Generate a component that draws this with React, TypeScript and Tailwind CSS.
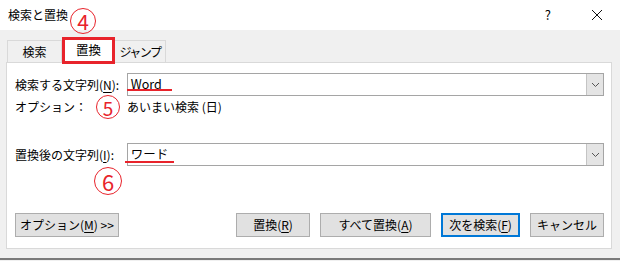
import type { ReactNode } from "react";

const FONT = "font-['Noto_Sans_CJK_JP','Noto_Sans',sans-serif]";

function Mn({ children }: { children: ReactNode }) {
  return <span className="underline underline-offset-2">{children}</span>;
}

function Circled({ n, className }: { n: string; className: string }) {
  return (
    <div
      className={`absolute flex items-center justify-center rounded-full border-[1.5px] border-[#e8232b] text-[#e8232b] leading-none ${className}`}
    >
      {n}
    </div>
  );
}

function Combo({ value }: { value: string }) {
  return (
    <div className="flex h-[23px] w-[478px] items-stretch border border-[#a5a5a5] bg-white">
      <div className="flex flex-1 items-center pl-[3px] text-[12.5px] text-black">{value}</div>
      <div className="flex w-[17px] items-center justify-center border-l border-[#c4c4c4] bg-[#e4e4e4]">
        <svg width="9" height="6" viewBox="0 0 9 6">
          <polyline points="1,1 4.5,4.5 8,1" fill="none" stroke="#555" strokeWidth="1" />
        </svg>
      </div>
    </div>
  );
}

function Btn({ children, w, primary }: { children: ReactNode; w: string; primary?: boolean }) {
  return (
    <div
      className={`flex h-[24px] items-center justify-center bg-[#e1e1e1] text-[12px] text-black ${w} ${
        primary ? "border-2 border-[#0078d7]" : "border border-[#adadad]"
      }`}
    >
      {children}
    </div>
  );
}

export default function App() {
  return (
    <div className={`relative h-[261px] w-[620px] overflow-hidden bg-[#f0f0f0] ${FONT}`}>
      {/* title bar */}
      <div className="flex h-[30px] items-center bg-white pl-[8px] text-[12px] text-black">
        <span>検索と置換</span>
        <span className="ml-auto mr-[40px] text-[13px]">?</span>
        <svg className="mr-[17px]" width="12" height="12" viewBox="0 0 12 12">
          <path d="M1 1L11 11M11 1L1 11" stroke="#111" strokeWidth="1" />
        </svg>
      </div>

      {/* tabs */}
      <div className="flex h-[32px] items-end pl-[7px] text-[12px] text-black">
        <div className="flex h-[22px] w-[55px] items-center justify-center border border-b-0 border-[#d9d9d9] bg-[#f0f0f0]">
          検索
        </div>
        <div className="relative z-10 -mb-[2px] flex h-[27px] w-[53px] items-center justify-center border-[3px] border-[#e8232b] bg-white pb-[1px] text-[12.5px]">
          置換
        </div>
        <div className="flex h-[22px] w-[51px] items-center justify-center border border-b-0 border-l-0 border-[#d9d9d9] bg-[#f0f0f0] tracking-[-1.5px]">
          ジャンプ
        </div>
      </div>

      {/* panel */}
      <div className="ml-[6px] flex h-[187px] w-[606px] flex-col border border-[#d9d9d9] bg-white pl-[8px] pr-[7px] pt-[10px] text-[12px] text-black">
        <div className="flex h-[23px] items-center">
          <div className="w-[112px]">
            検索する文字列(<Mn>N</Mn>):
          </div>
          <Combo value="Word" />
        </div>
        <div className="mt-[2px] flex h-[18px] items-center">
          <div className="w-[112px]">オプション：</div>
          <div>あいまい検索 (日)</div>
        </div>
        <div className="mt-[27px] flex h-[23px] items-center">
          <div className="w-[112px]">
            置換後の文字列(<Mn>I</Mn>):
          </div>
          <Combo value="ワード" />
        </div>
        <div className="mt-[47px] flex items-center">
          <Btn w="w-[104px]">
            オプション(<Mn>M</Mn>) &gt;&gt;
          </Btn>
          <div className="ml-auto flex gap-[10px]">
            <Btn w="w-[74px]">
              置換(<Mn>R</Mn>)
            </Btn>
            <Btn w="w-[111px]">
              すべて置換(<Mn>A</Mn>)
            </Btn>
            <Btn w="w-[79px]" primary>
              次を検索(<Mn>F</Mn>)
            </Btn>
            <Btn w="w-[74px]">キャンセル</Btn>
          </div>
        </div>
      </div>

      <div className="mt-[9px] h-[2px] w-full bg-[#7a7a7a]" />

      {/* annotations */}
      <Circled n="4" className="left-[70px] top-[8px] h-[26px] w-[26px] text-[21px]" />
      <Circled n="5" className="left-[96px] top-[95px] h-[24px] w-[24px] text-[19px]" />
      <Circled n="6" className="left-[94px] top-[167px] h-[28px] w-[28px] text-[22px]" />
      <div className="absolute left-[127px] top-[89px] h-[2px] w-[45px] bg-[#e8232b]" />
      <div className="absolute left-[125px] top-[161px] h-[2px] w-[49px] bg-[#e8232b]" />
    </div>
  );
}
